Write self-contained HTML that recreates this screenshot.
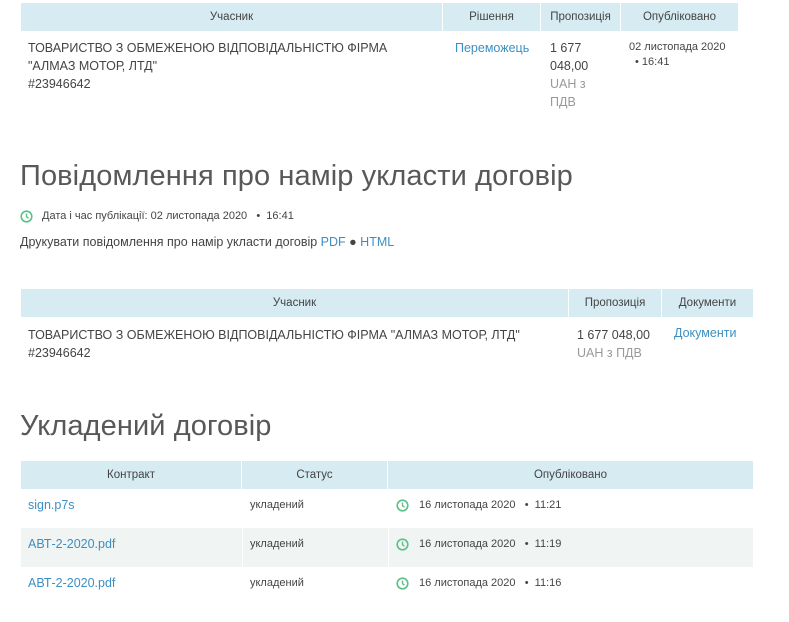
<!DOCTYPE html><html><head><meta charset="utf-8"><style>
body{margin:0;width:789px;height:622px;background:#fff;font-family:"Liberation Sans",sans-serif;color:#444;position:relative;overflow:hidden}
.a{position:absolute;white-space:nowrap}
.hd{position:absolute;background:#d6ebf2;font-size:11.5px;color:#444}
.hd div{position:absolute;top:0;height:100%;display:flex;align-items:center;justify-content:center;border-right:1px solid #fff;box-sizing:border-box}
.t{font-size:12.5px;color:#444}
.l{color:#3d8fc2}
.g{color:#999}
.s{font-size:11px}
h2{position:absolute;margin:0;font-weight:normal;font-size:29px;color:#585858;left:20px;white-space:nowrap;letter-spacing:0.1px}
</style></head><body>
<div class="hd" style="left:21px;top:3px;width:717px;height:28px">
<div style="left:0;width:422px">Учасник</div><div style="left:422px;width:98px">Рішення</div><div style="left:520px;width:80px">Пропозиція</div><div style="left:600px;width:117px;border:0">Опубліковано</div></div>
<div class="a t" style="left:28px;top:39px;line-height:18px">ТОВАРИСТВО З ОБМЕЖЕНОЮ ВІДПОВІДАЛЬНІСТЮ ФІРМА<br>"АЛМАЗ МОТОР, ЛТД"<br>#23946642</div>
<div class="a t l" style="left:455px;top:39px;line-height:18px">Переможець</div>
<div class="a t" style="left:550px;top:39px;line-height:18px">1 677<br>048,00<br><span class="g">UAH з<br>ПДВ</span></div>
<div class="a s" style="left:629px;top:40px;line-height:15px">02 листопада 2020<br><span style="margin-left:6px">• 16:41</span></div>
<h2 style="top:160px">Повідомлення про намір укласти договір</h2>
<svg class="a" style="left:20px;top:210px" width="13" height="13" viewBox="0 0 13 13"><circle cx="6.5" cy="6.5" r="5.3" fill="none" stroke="#5cc08a" stroke-width="1.6"/><path d="M6.5 3.5V6.8L8.5 8.2" fill="none" stroke="#5cc08a" stroke-width="1.4"/></svg>
<div class="a s" style="left:42px;top:210px">Дата і час публікації: 02 листопада 2020 &nbsp;&nbsp;• &nbsp;16:41</div>
<div class="a t" style="left:20px;top:235px">Друкувати повідомлення про намір укласти договір <span class="l">PDF</span> ● <span class="l">HTML</span></div>
<div class="hd" style="left:21px;top:289px;width:732px;height:28px">
<div style="left:0;width:548px">Учасник</div><div style="left:548px;width:93px">Пропозиція</div><div style="left:641px;width:91px;border:0">Документи</div></div>
<div class="a t" style="left:28px;top:326px;line-height:18px">ТОВАРИСТВО З ОБМЕЖЕНОЮ ВІДПОВІДАЛЬНІСТЮ ФІРМА "АЛМАЗ МОТОР, ЛТД"<br>#23946642</div>
<div class="a t" style="left:577px;top:326px;line-height:18px">1 677 048,00<br><span class="g">UAH з ПДВ</span></div>
<div class="a t l" style="left:674px;top:326px">Документи</div>
<h2 style="top:410px">Укладений договір</h2>
<div class="hd" style="left:21px;top:461px;width:732px;height:28px">
<div style="left:0;width:221px">Контракт</div><div style="left:221px;width:146px">Статус</div><div style="left:367px;width:365px;border:0">Опубліковано</div></div>
<div class="a" style="left:21px;top:528px;width:732px;height:39px;background:#f0f4f2"></div>
<div class="a" style="left:242px;top:528px;width:1px;height:39px;background:#fff"></div>
<div class="a" style="left:388px;top:528px;width:1px;height:39px;background:#fff"></div>
<div class="a t l" style="left:28px;top:498px">sign.p7s</div>
<div class="a t l" style="left:28px;top:537px">АВТ-2-2020.pdf</div>
<div class="a t l" style="left:28px;top:576px">АВТ-2-2020.pdf</div>
<div class="a s" style="left:250px;top:499px">укладений</div>
<div class="a s" style="left:250px;top:538px">укладений</div>
<div class="a s" style="left:250px;top:577px">укладений</div>
<svg class="a" style="left:396px;top:499px" width="13" height="13" viewBox="0 0 13 13"><circle cx="6.5" cy="6.5" r="5.3" fill="none" stroke="#5cc08a" stroke-width="1.6"/><path d="M6.5 3.5V6.8L8.5 8.2" fill="none" stroke="#5cc08a" stroke-width="1.4"/></svg>
<svg class="a" style="left:396px;top:538px" width="13" height="13" viewBox="0 0 13 13"><circle cx="6.5" cy="6.5" r="5.3" fill="none" stroke="#5cc08a" stroke-width="1.6"/><path d="M6.5 3.5V6.8L8.5 8.2" fill="none" stroke="#5cc08a" stroke-width="1.4"/></svg>
<svg class="a" style="left:396px;top:577px" width="13" height="13" viewBox="0 0 13 13"><circle cx="6.5" cy="6.5" r="5.3" fill="none" stroke="#5cc08a" stroke-width="1.6"/><path d="M6.5 3.5V6.8L8.5 8.2" fill="none" stroke="#5cc08a" stroke-width="1.4"/></svg>
<div class="a s" style="left:419px;top:499px">16 листопада 2020 &nbsp;&nbsp;• &nbsp;11:21</div>
<div class="a s" style="left:419px;top:538px">16 листопада 2020 &nbsp;&nbsp;• &nbsp;11:19</div>
<div class="a s" style="left:419px;top:577px">16 листопада 2020 &nbsp;&nbsp;• &nbsp;11:16</div>
</body></html>
